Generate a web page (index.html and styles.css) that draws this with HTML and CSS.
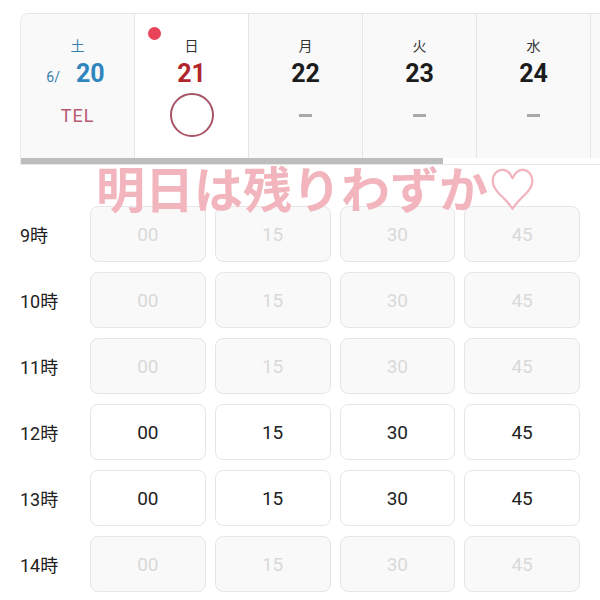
FILE: index.html
```html
<!DOCTYPE html>
<html lang="ja">
<head>
<meta charset="utf-8">
<link rel="stylesheet" href="styles.css">
</head>
<body>
<div class="page">
  <div class="header">
    <div class="days">
      <div class="day">
        <div class="wd sat">土</div>
        <div class="num sat"><span class="month">6/</span>20</div>
        <div class="status tel">TEL</div>
      </div>
      <div class="day selected">
        <span class="dot"></span>
        <div class="wd">日</div>
        <div class="num sun">21</div>
        <div class="status"><span class="circle"></span></div>
      </div>
      <div class="day">
        <div class="wd">月</div>
        <div class="num">22</div>
        <div class="status"><span class="dash"></span></div>
      </div>
      <div class="day">
        <div class="wd">火</div>
        <div class="num">23</div>
        <div class="status"><span class="dash"></span></div>
      </div>
      <div class="day">
        <div class="wd">水</div>
        <div class="num">24</div>
        <div class="status"><span class="dash"></span></div>
      </div>
      <div class="day"></div>
    </div>
    <div class="scrollbar"><div class="thumb"></div></div>
  </div>

  <div class="slots">
    <div class="row">
      <div class="hour">9時</div>
      <div class="cells">
        <div class="cell off">00</div><div class="cell off">15</div><div class="cell off">30</div><div class="cell off">45</div>
      </div>
    </div>
    <div class="row">
      <div class="hour">10時</div>
      <div class="cells">
        <div class="cell off">00</div><div class="cell off">15</div><div class="cell off">30</div><div class="cell off">45</div>
      </div>
    </div>
    <div class="row">
      <div class="hour">11時</div>
      <div class="cells">
        <div class="cell off">00</div><div class="cell off">15</div><div class="cell off">30</div><div class="cell off">45</div>
      </div>
    </div>
    <div class="row">
      <div class="hour">12時</div>
      <div class="cells">
        <div class="cell">00</div><div class="cell">15</div><div class="cell">30</div><div class="cell">45</div>
      </div>
    </div>
    <div class="row">
      <div class="hour">13時</div>
      <div class="cells">
        <div class="cell">00</div><div class="cell">15</div><div class="cell">30</div><div class="cell">45</div>
      </div>
    </div>
    <div class="row">
      <div class="hour">14時</div>
      <div class="cells">
        <div class="cell off">00</div><div class="cell off">15</div><div class="cell off">30</div><div class="cell off">45</div>
      </div>
    </div>
  </div>

  <div class="sticker">明日は残りわずか♡</div>
</div>
</body>
</html>
```
FILE: styles.css
```css
* { box-sizing: border-box; }
html, body { margin: 0; padding: 0; background: #ffffff; }
body {
  width: 600px;
  height: 600px;
  overflow: hidden;
  font-family: Roboto, "Noto Sans CJK JP", sans-serif;
  color: #222;
}
.page {
  position: relative;
  padding: 13px 0 0 20px;
}
.header {
  width: 580px;
  overflow: hidden;
  border-top: 1px solid #e6e6e6;
  border-left: 1px solid #ececec;
  border-top-left-radius: 8px;
  border-bottom: 1px solid #e8e8e8;
}
.days {
  display: flex;
  height: 144px;
}
.day {
  position: relative;
  flex: 0 0 114px;
  background: #f9f9f9;
  border-right: 1px solid #e6e6e6;
  display: flex;
  flex-direction: column;
  align-items: center;
}
.day.selected { background: #ffffff; }
.wd {
  margin-top: 21px;
  height: 20px;
  line-height: 20px;
  font-size: 14px;
  font-family: "Noto Sans CJK JP", sans-serif;
  color: #333;
}
.wd.sat { color: #3a7fae; }
.num {
  margin-top: 4px;
  height: 30px;
  line-height: 30px;
  font-size: 25px;
  font-weight: 700;
  color: #1c1c1c;
}
.num.sat { color: #2f86bf; }
.num.sun { color: #b0262c; }
.month {
  font-size: 14px;
  font-weight: 400;
  color: #3a7fae;
  margin-right: 16px;
  margin-left: -4px;
}
.status {
  margin-top: 3px;
  height: 46px;
  display: flex;
  align-items: center;
  justify-content: center;
}
.tel {
  font-size: 18px;
  color: #b75a72;
  letter-spacing: 1px;
}
.circle {
  width: 44px;
  height: 44px;
  border: 2px solid #a85466;
  border-radius: 50%;
}
.dash {
  width: 13px;
  height: 3px;
  background: #a9a9a9;
}
.dot {
  position: absolute;
  left: 13px;
  top: 13px;
  width: 13px;
  height: 13px;
  border-radius: 50%;
  background: #e8435a;
}
.scrollbar {
  height: 6px;
  background: #ffffff;
}
.thumb {
  width: 422px;
  height: 6px;
  background: #bdbdbd;
}
.slots {
  margin-top: 41px;
  display: flex;
  flex-direction: column;
  gap: 10px;
  width: 560px;
}
.row {
  display: flex;
  align-items: center;
  height: 56px;
}
.hour {
  flex: 0 0 70px;
  font-size: 18px;
  color: #222;
  font-family: Roboto, "Noto Sans CJK JP", sans-serif;
}
.cells {
  flex: 1;
  display: grid;
  grid-template-columns: repeat(4, 1fr);
  gap: 9px;
  height: 100%;
}
.cell {
  border: 1px solid #e6e6e6;
  border-radius: 8px;
  background: #ffffff;
  display: flex;
  align-items: center;
  justify-content: center;
  font-size: 19px;
  color: #222;
}
.cell.off {
  background: #f9f9f9;
  color: #d9d9d9;
}
.sticker {
  position: absolute;
  left: 96px;
  top: 160px;
  font-family: "Noto Sans CJK JP", sans-serif;
  font-weight: 700;
  font-size: 49px;
  line-height: 54px;
  color: #f2b5bd;
  white-space: nowrap;
}
```
